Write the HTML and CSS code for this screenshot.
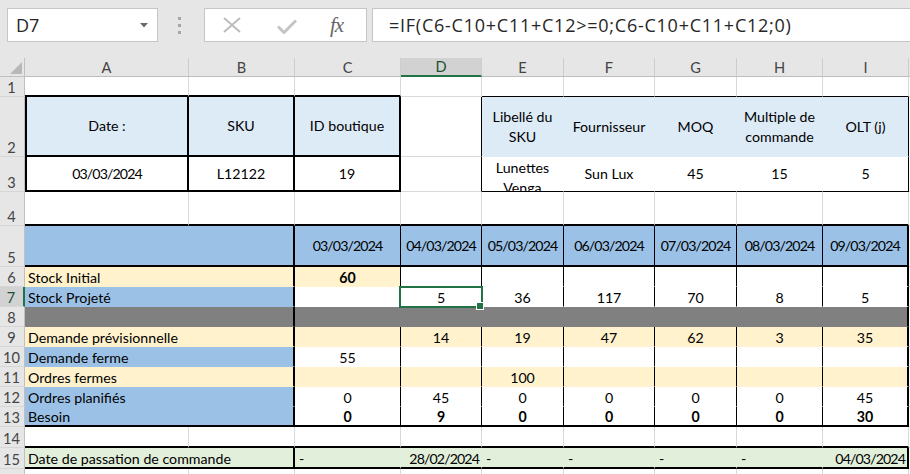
FILE: index.html
```html
<!DOCTYPE html>
<html lang="fr">
<head>
<meta charset="utf-8">
<title>Plan d'approvisionnement</title>
<link rel="stylesheet" href="styles.css">
</head>
<body>
<div class="fbar">
  <div class="namebox"><span>D7</span><svg class="dd" width="8" height="5" viewBox="0 0 8 5"><path d="M0 0H8L4 4.5Z" fill="#6b6b6b"/></svg></div>
  <div class="grip"><i></i><i></i><i></i></div>
  <div class="btns">
    <svg class="ic-x" width="18" height="16" viewBox="0 0 18 16"><path d="M1 1L17 15M17 1L1 15" stroke="#bdbdbd" stroke-width="2" fill="none"/></svg>
    <svg class="ic-ok" width="20" height="15" viewBox="0 0 20 15"><path d="M1 7.5L7 13.5L19 1.5" stroke="#c4c4c4" stroke-width="3" fill="none"/></svg>
    <span class="fx">fx</span>
  </div>
  <div class="formula">=IF(C6-C10+C11+C12&gt;=0;C6-C10+C11+C12;0)</div>
</div>
<div class="sheet">
  <!-- header -->
  <div class="corner"><svg width="25" height="19" viewBox="0 0 25 19"><path d="M22 4V16H10Z" fill="#b8b8b8"/></svg></div>
  <div class="ch">A</div><div class="ch">B</div><div class="ch">C</div><div class="ch sel">D</div><div class="ch">E</div><div class="ch">F</div><div class="ch">G</div><div class="ch">H</div><div class="ch">I</div><div class="ch x"></div>

  <!-- row 1 -->
  <div class="rh">1</div>
  <div class="c B2"></div><div class="c B2"></div><div class="c B2"></div><div class="c"></div>
  <div class="c B1"></div><div class="c B1"></div><div class="c B1"></div><div class="c B1"></div><div class="c B1"></div><div class="c x"></div>

  <!-- row 2 -->
  <div class="rh">2</div>
  <div class="c fb mid L2 R2 B2">Date :</div>
  <div class="c fb mid R2 B2">SKU</div>
  <div class="c fb mid R2 B2">ID boutique</div>
  <div class="c R1"></div>
  <div class="c fb mid wrap Rn Bn">Libellé du SKU</div>
  <div class="c fb mid Rn Bn">Fournisseur</div>
  <div class="c fb mid Rn Bn">MOQ</div>
  <div class="c fb mid wrap Rn Bn">Multiple de commande</div>
  <div class="c fb mid R1 Bn">OLT (j)</div>
  <div class="c x"></div>

  <!-- row 3 -->
  <div class="rh">3</div>
  <div class="c fw mid n L2 R2 B2">03/03/2024</div>
  <div class="c fw mid R2 B2">L12122</div>
  <div class="c fw mid R2 B2">19</div>
  <div class="c R1"></div>
  <div class="c fw mid wrap low Rn B1">Lunettes Venga</div>
  <div class="c fw mid Rn B1">Sun Lux</div>
  <div class="c fw mid Rn B1">45</div>
  <div class="c fw mid Rn B1">15</div>
  <div class="c fw mid R1 B1">5</div>
  <div class="c x"></div>

  <!-- row 4 -->
  <div class="rh">4</div>
  <div class="c B2"></div><div class="c B2"></div><div class="c B2"></div><div class="c B2"></div><div class="c B2"></div>
  <div class="c B2"></div><div class="c B2"></div><div class="c B2"></div><div class="c B2"></div><div class="c x"></div>

  <!-- row 5 -->
  <div class="rh">5</div>
  <div class="c fB span2 R2 B2"></div>
  <div class="c fB mid n R1 B2">03/03/2024</div>
  <div class="c fB mid n R1 B2">04/03/2024</div>
  <div class="c fB mid n R1 B2">05/03/2024</div>
  <div class="c fB mid n R1 B2">06/03/2024</div>
  <div class="c fB mid n R1 B2">07/03/2024</div>
  <div class="c fB mid n R1 B2">08/03/2024</div>
  <div class="c fB mid n R2 B2">09/03/2024</div>
  <div class="c x"></div>

  <!-- row 6 -->
  <div class="rh">6</div>
  <div class="c fc span2 lbl R2 Bn">Stock Initial</div>
  <div class="c fc ctr b R1 Bn">60</div>
  <div class="c fw R1 Bn"></div><div class="c fw R1 Bn"></div><div class="c fw R1 Bn"></div>
  <div class="c fw R1 Bn"></div><div class="c fw R1 Bn"></div><div class="c fw R2 Bn"></div>
  <div class="c x"></div>

  <!-- row 7 -->
  <div class="rh sel">7</div>
  <div class="c fB span2 lbl R2 Bn">Stock Projeté</div>
  <div class="c fw R1 Bn"></div>
  <div class="c fw ctr R1 Bn active">5<span class="selbox"></span><span class="handle"></span></div>
  <div class="c fw ctr R1 Bn">36</div>
  <div class="c fw ctr R1 Bn">117</div>
  <div class="c fw ctr R1 Bn">70</div>
  <div class="c fw ctr R1 Bn">8</div>
  <div class="c fw ctr R2 Bn">5</div>
  <div class="c x"></div>

  <!-- row 8 -->
  <div class="rh">8</div>
  <div class="c fg span2 R2 Bn"></div>
  <div class="c fg Rn Bn"></div><div class="c fg Rn Bn"></div><div class="c fg Rn Bn"></div>
  <div class="c fg Rn Bn"></div><div class="c fg Rn Bn"></div><div class="c fg Rn Bn"></div><div class="c fg R2 Bn"></div>
  <div class="c x"></div>

  <!-- row 9 -->
  <div class="rh">9</div>
  <div class="c fc span2 lbl R2 Bn">Demande prévisionnelle</div>
  <div class="c fc R1 Bn"></div>
  <div class="c fc ctr R1 Bn">14</div>
  <div class="c fc ctr R1 Bn">19</div>
  <div class="c fc ctr R1 Bn">47</div>
  <div class="c fc ctr R1 Bn">62</div>
  <div class="c fc ctr R1 Bn">3</div>
  <div class="c fc ctr R2 Bn">35</div>
  <div class="c x"></div>

  <!-- row 10 -->
  <div class="rh">10</div>
  <div class="c fB span2 lbl R2 Bn">Demande ferme</div>
  <div class="c fw ctr R1 Bn">55</div>
  <div class="c fw R1 Bn"></div><div class="c fw R1 Bn"></div><div class="c fw R1 Bn"></div>
  <div class="c fw R1 Bn"></div><div class="c fw R1 Bn"></div><div class="c fw R2 Bn"></div>
  <div class="c x"></div>

  <!-- row 11 -->
  <div class="rh">11</div>
  <div class="c fc span2 lbl R2 Bn">Ordres fermes</div>
  <div class="c fc R1 Bn"></div>
  <div class="c fc R1 Bn"></div>
  <div class="c fc ctr R1 Bn">100</div>
  <div class="c fc R1 Bn"></div><div class="c fc R1 Bn"></div><div class="c fc R1 Bn"></div><div class="c fc R2 Bn"></div>
  <div class="c x"></div>

  <!-- row 12 -->
  <div class="rh">12</div>
  <div class="c fB span2 lbl R2 Bn">Ordres planifiés</div>
  <div class="c fw ctr R1 Bn">0</div>
  <div class="c fw ctr R1 Bn">45</div>
  <div class="c fw ctr R1 Bn">0</div>
  <div class="c fw ctr R1 Bn">0</div>
  <div class="c fw ctr R1 Bn">0</div>
  <div class="c fw ctr R1 Bn">0</div>
  <div class="c fw ctr R2 Bn">45</div>
  <div class="c x"></div>

  <!-- row 13 -->
  <div class="rh">13</div>
  <div class="c fB span2 lbl R2 B2">Besoin</div>
  <div class="c fw ctr b R1 B2">0</div>
  <div class="c fw ctr b R1 B2">9</div>
  <div class="c fw ctr b R1 B2">0</div>
  <div class="c fw ctr b R1 B2">0</div>
  <div class="c fw ctr b R1 B2">0</div>
  <div class="c fw ctr b R1 B2">0</div>
  <div class="c fw ctr b R2 B2">30</div>
  <div class="c x"></div>

  <!-- row 14 -->
  <div class="rh">14</div>
  <div class="c B2"></div><div class="c B2"></div><div class="c B2"></div><div class="c B2"></div><div class="c B2"></div>
  <div class="c B2"></div><div class="c B2"></div><div class="c B2"></div><div class="c B2"></div><div class="c x"></div>

  <!-- row 15 -->
  <div class="rh">15</div>
  <div class="c fgr span2 lbl R2 B2">Date de passation de commande</div>
  <div class="c fgr dash Rn B2">-</div>
  <div class="c fgr rt n Rn B2">28/02/2024</div>
  <div class="c fgr dash Rn B2">-</div>
  <div class="c fgr dash Rn B2">-</div>
  <div class="c fgr dash Rn B2">-</div>
  <div class="c fgr dash Rn B2">-</div>
  <div class="c fgr rt n R2 B2">04/03/2024</div>
  <div class="c x"></div>

  <!-- row 16 -->
  <div class="rh"></div>
  <div class="c"></div><div class="c"></div><div class="c"></div><div class="c"></div><div class="c"></div>
  <div class="c"></div><div class="c"></div><div class="c"></div><div class="c"></div><div class="c x"></div>
</div>
</body>
</html>
```

FILE: styles.css
```css
* { box-sizing: border-box; }
html, body { margin: 0; padding: 0; }
body {
  width: 910px;
  height: 474px;
  overflow: hidden;
  background: #ffffff;
  font-family: Lato, "Liberation Sans", sans-serif;
}

/* formula bar */
.fbar {
  height: 58px;
  background: #e6e6e6;
  display: flex;
  align-items: flex-start;
  padding: 8px 0 0 7px;
}
.namebox {
  width: 151px;
  height: 34px;
  background: #fff;
  border: 1px solid #c6c6c6;
  display: flex;
  align-items: center;
  justify-content: space-between;
  padding: 0 9px 0 8px;
  font-family: "Open Sans", "Noto Sans", sans-serif;
  font-size: 18px;
  color: #262626;
}
.grip {
  width: 4px;
  height: 34px;
  margin-left: 20px;
  display: flex;
  flex-direction: column;
  justify-content: center;
  gap: 4px;
}
.grip i {
  display: block;
  width: 3px;
  height: 3px;
  background: #a6a6a6;
}
.btns {
  width: 163px;
  height: 34px;
  margin-left: 22px;
  background: #fff;
  border: 1px solid #c6c6c6;
  display: flex;
  align-items: center;
  padding-left: 18px;
}
.ic-ok { margin-left: 36px; margin-top: 2px; }
.fx {
  margin-left: 33px;
  font-family: "Liberation Serif", "DejaVu Serif", serif;
  font-style: italic;
  font-size: 21px;
  color: #666;
  letter-spacing: -1px;
}
.formula {
  flex: 1;
  height: 34px;
  margin-left: 5px;
  background: #fff;
  border: 1px solid #c6c6c6;
  border-right: 0;
  display: flex;
  align-items: center;
  padding-left: 16px;
  font-family: "Open Sans", "Noto Sans", sans-serif;
  font-size: 18px;
  letter-spacing: 0.75px;
  color: #262626;
  white-space: nowrap;
}

/* sheet grid */
.sheet {
  display: grid;
  grid-template-columns: 25px 164px 106px 106px 81px 82px 91px 82px 86px 86px 1fr;
  grid-template-rows: 19px 20px 60px 35px 34px 41px repeat(8, 20px) 21px 21px 20px;
  font-size: 14.2px;
  color: #000;
}
.corner {
  background: #e6e6e6;
  border-right: 1px solid #c0c0c0;
  border-bottom: 1px solid #c0c0c0;
}
.corner svg { display: block; }
.ch {
  background: #e6e6e6;
  border-right: 1px solid #cdcdcd;
  border-bottom: 1px solid #bdbdbd;
  display: flex;
  align-items: center;
  justify-content: center;
  color: #444;
  font-size: 14.6px;
  line-height: 17px;
}
.ch.sel {
  background: #d2d2d2;
  border-bottom: 2px solid #217346;
  color: #1d4f33;
}
.rh {
  background: #e6e6e6;
  border-right: 1px solid #c0c0c0;
  border-bottom: 1px solid #d6d6d6;
  display: flex;
  align-items: flex-end;
  justify-content: center;
  color: #444;
  font-size: 14.6px;
  line-height: 17px;
  padding-right: 1px;
}
.rh.sel {
  background: #d2d2d2;
  border-right: 2px solid #217346;
  color: #1d4f33;
}

.c {
  border-right: 1px solid #d9d9d9;
  border-bottom: 1px solid #d9d9d9;
  display: flex;
  align-items: flex-end;
  padding: 0 3px;
  line-height: 17px;
  white-space: nowrap;
  overflow: hidden;
  min-width: 0;
}
.c.x { border-right: 0; }
.span2 { grid-column: span 2; }
.mid { align-items: center; justify-content: center; text-align: center; line-height: 20px; }
.wrap { white-space: normal; }
.low { padding-top: 8px; }
.ctr { justify-content: center; }
.rt { justify-content: flex-end; padding-right: 2px; }
.dash { padding-left: 4px; }
.n { letter-spacing: -0.9px; }
.b { font-weight: bold; }
.lbl { padding-left: 3px; }

/* fills */
.fb { background: #ddebf7; }
.fB { background: #9bc2e6; }
.fc { background: #fff2cc; }
.fg { background: #808080; }
.fgr { background: #e2efda; }
.fw { background: #ffffff; }

/* borders */
.R1 { border-right: 1px solid #000; }
.R2 { border-right: 2px solid #000; }
.Rn { border-right-color: transparent; }
.B1 { border-bottom: 1px solid #000; }
.B2 { border-bottom: 2px solid #000; }
.Bn { border-bottom-color: transparent; }
.L2 { border-left: 2px solid #000; }

/* active cell */
.active { position: relative; overflow: visible; }
.selbox {
  position: absolute;
  left: -2px;
  top: -1px;
  right: -2px;
  bottom: -2px;
  border: 2px solid #217346;
  pointer-events: none;
}
.handle {
  position: absolute;
  right: -3px;
  bottom: -4px;
  width: 6px;
  height: 6px;
  background: #217346;
  border: 1px solid #fff;
  box-sizing: content-box;
}
```
